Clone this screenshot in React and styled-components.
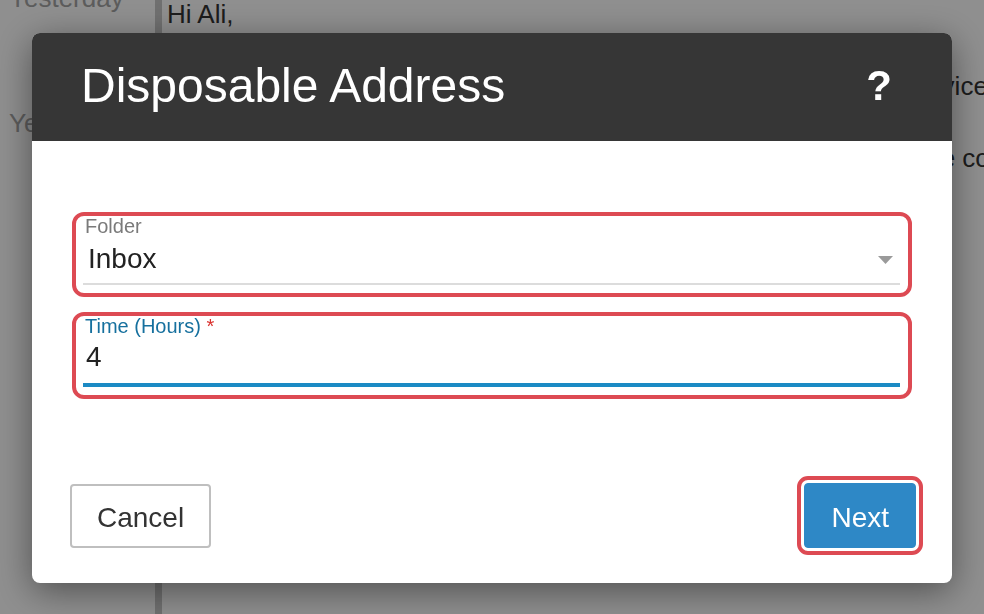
import React from 'react';
import styled, { createGlobalStyle } from 'styled-components';

const GlobalStyle = createGlobalStyle`
  html, body {
    margin: 0;
    padding: 0;
    background: #ffffff;
    overflow: hidden;
    font-family: "Liberation Sans", Arial, sans-serif;
  }
`;

const App = () => {
  return (
    <>
      <GlobalStyle />
      <Page>
        <Sidebar>
          <DayLabel>Yesterday</DayLabel>
          <DayLabel>Yesterday</DayLabel>
        </Sidebar>
        <Message>
          <Para>Hi Ali,</Para>
          <Para>So, your temporary disposable address is ready to use with any service.</Para>
          <Para>You can forward messages or delete it at any time, instantly from the console.</Para>
        </Message>
      </Page>

      <Overlay>
        <Dialog>
          <Header>
            <Title>Disposable Address</Title>
            <Help>?</Help>
          </Header>

          <Body>
            <Highlight>
              <Field>
                <Label>Folder</Label>
                <SelectBox>
                  <span>Inbox</span>
                  <svg width="15" height="8" viewBox="0 0 15 8">
                    <path d="M0 0 L15 0 L7.5 8 Z" fill="#9a9a9a" />
                  </svg>
                </SelectBox>
              </Field>
            </Highlight>

            <Highlight>
              <Field $focused>
                <Label $focused>
                  Time (Hours) <Req>*</Req>
                </Label>
                <TextInput defaultValue="4" />
              </Field>
            </Highlight>
          </Body>

          <Footer>
            <Button>Cancel</Button>
            <Button $primary>Next</Button>
          </Footer>
        </Dialog>
      </Overlay>
    </>
  );
};

export default App;

const Page = styled.div`
  display: flex;
  height: 100vh;
  color: #333;
`;

const Sidebar = styled.div`
  width: 146px;
  flex-shrink: 0;
  padding-left: 9px;
  margin-top: -20px;
  border-right: 7px solid #c8c8c8;
  overflow: hidden;
  white-space: nowrap;
`;

const DayLabel = styled.div`
  height: 125px;
  font-size: 26px;
  line-height: 36px;
  color: #a4a4a4;
`;

const Message = styled.div`
  flex: 1;
  padding-left: 5px;
  margin-top: -4px;
  overflow: hidden;
  white-space: nowrap;
`;

const Para = styled.p`
  margin: 0 0 36px;
  font-size: 26px;
  line-height: 36px;
  color: #333;
`;

const Overlay = styled.div`
  position: fixed;
  inset: 0;
  background: rgba(0, 0, 0, 0.44);
  display: flex;
  align-items: center;
  justify-content: center;
`;

const Dialog = styled.div`
  width: 920px;
  height: 550px;
  margin-top: 2px;
  background: #fff;
  border-radius: 8px;
  overflow: hidden;
  display: flex;
  flex-direction: column;
  box-shadow: 0 8px 36px rgba(0, 0, 0, 0.45);
`;

const Header = styled.div`
  height: 108px;
  flex-shrink: 0;
  box-sizing: border-box;
  background: #363636;
  display: flex;
  align-items: center;
  justify-content: space-between;
  padding: 0 60px 3px 49px;
  color: #fff;
`;

const Title = styled.h2`
  margin: 0;
  font-size: 48px;
  line-height: 48px;
  font-weight: normal;
`;

const Help = styled.span`
  font-size: 42px;
  line-height: 42px;
  font-weight: bold;
`;

const Body = styled.div`
  flex: 1;
  display: flex;
  flex-direction: column;
  gap: 31px;
  padding: 75px 52px 0 51px;
`;

const Highlight = styled.div`
  position: relative;

  &::after {
    content: '';
    position: absolute;
    top: -4px;
    bottom: -12px;
    left: -11px;
    right: -12px;
    border: 4px solid #dd4a53;
    border-radius: 12px;
    pointer-events: none;
  }
`;

const Field = styled.div`
  display: flex;
  flex-direction: column;
  gap: ${p => (p.$focused ? '5px' : '7px')};
  padding-bottom: ${p => (p.$focused ? '10px' : '8px')};
  border-bottom: ${p => (p.$focused ? '4px solid #1b8ac4' : '2px solid #dcdcdc')};
`;

const Label = styled.label`
  padding-left: 2px;
  font-size: 20px;
  line-height: 20px;
  color: ${p => (p.$focused ? '#16709e' : '#7a7a7a')};
`;

const Req = styled.span`
  color: #d9302c;
`;

const SelectBox = styled.div`
  display: flex;
  align-items: center;
  justify-content: space-between;
  height: 32px;
  padding: 0 7px 0 5px;
  font-size: 28px;
  line-height: 32px;
  color: #222;

  svg {
    margin-top: 2px;
  }
`;

const TextInput = styled.input`
  border: none;
  outline: none;
  padding: 0 3px;
  height: 32px;
  font-family: "Liberation Sans", Arial, sans-serif;
  font-size: 28px;
  color: #222;
  background: transparent;
`;

const Footer = styled.div`
  display: flex;
  justify-content: space-between;
  align-items: center;
  padding: 0 36px 35px 38px;
`;

const Button = styled.button`
  height: ${p => (p.$primary ? '65px' : '64px')};
  padding: 5px ${p => (p.$primary ? '26px' : '25px')} 0;
  font-family: "Liberation Sans", Arial, sans-serif;
  font-size: 28px;
  border-radius: 4px;
  cursor: pointer;
  color: ${p => (p.$primary ? '#fff' : '#333')};
  background: ${p => (p.$primary ? '#2e88c6' : '#fff')};
  border: ${p => (p.$primary ? '1px solid #2e88c6' : '2px solid #bfbfbf')};
  outline: ${p => (p.$primary ? '4px solid #dd4a53' : 'none')};
  outline-offset: 3px;
`;
